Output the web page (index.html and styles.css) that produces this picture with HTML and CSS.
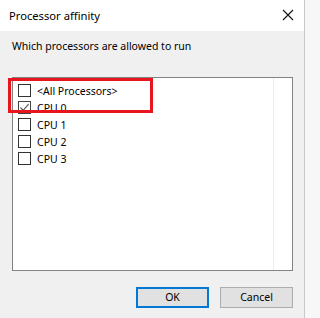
FILE: index.html
```html
<!DOCTYPE html>
<html>
<head>
<meta charset="utf-8">
<link rel="stylesheet" href="styles.css">
</head>
<body>
<div class="window">
  <div class="titlebar">
    <span class="title">Processor affinity</span>
    <svg class="close" width="12" height="12" viewBox="0 0 12 12"><path d="M1 1 L11 11 M11 1 L1 11" stroke="#111" stroke-width="1.1" fill="none"/></svg>
  </div>
  <div class="content">
    <div class="prompt">Which processors are allowed to run</div>
    <div class="listwrap">
      <div class="listbox">
        <div class="items">
          <div class="row"><span class="cb"></span><span>&lt;All Processors&gt;</span></div>
          <div class="row"><span class="cb checked"><svg width="11" height="11" viewBox="0 0 11 11"><path d="M1.5 5.5 L4.2 8.3 L9.6 2.2" stroke="#5a5a5a" stroke-width="1.2" fill="none"/></svg></span><span>CPU 0</span></div>
          <div class="row"><span class="cb"></span><span>CPU 1</span></div>
          <div class="row"><span class="cb"></span><span>CPU 2</span></div>
          <div class="row"><span class="cb"></span><span>CPU 3</span></div>
        </div>
      </div>
      <div class="highlight"></div>
    </div>
    <div class="buttons">
      <button class="btn default">OK</button>
      <button class="btn">Cancel</button>
    </div>
  </div>
</div>
</body>
</html>
```
FILE: styles.css
```css
html, body {
  margin: 0;
  padding: 0;
  background: #f7f7f7;
}
body {
  width: 310px;
  height: 318px;
  overflow: hidden;
  font-family: "Noto Sans", "Open Sans", sans-serif;
  font-size: 10.5px;
  color: #000;
}
.window {
  width: 304px;
  height: 318px;
  background: #f0f0f0;
  border-right: 1px solid #c9c9c9;
}
.titlebar {
  height: 31px;
  background: #fff;
  display: flex;
  align-items: center;
  justify-content: space-between;
  padding: 0 10px 0 9px;
}
.title {
  font-size: 11.2px;
  line-height: 16px;
}
.close {
  display: block;
  margin-top: -1px;
}
.content {
  padding: 0 11px 0 12px;
}
.prompt {
  margin-top: 7px;
  line-height: 16px;
}
.listwrap {
  position: relative;
  margin-top: 23px;
}
.listbox {
  height: 192px;
  border: 1px solid #828282;
  background: #fff;
}
.items {
  width: 261px;
  height: 192px;
  border-right: 1px solid #e3eefa;
  padding: 4px 0 0 5px;
  box-sizing: border-box;
}
.row {
  height: 17px;
  display: flex;
  align-items: center;
  gap: 6px;
  line-height: 16px;
}
.cb {
  width: 11px;
  height: 11px;
  border: 1px solid #333;
  background: #fff;
  display: flex;
  align-items: center;
  justify-content: center;
  margin-top: -1px;
}
.cb.checked {
  border-color: #444;
}
.cb svg {
  display: block;
}
.highlight {
  position: absolute;
  left: -4px;
  top: 1px;
  width: 139px;
  height: 29px;
  border: 3px solid #e8141e;
}
.buttons {
  display: flex;
  justify-content: flex-end;
  gap: 11px;
  margin-top: 16px;
}
.btn {
  width: 73px;
  height: 21px;
  background: #e1e1e1;
  border: 1px solid #adadad;
  font-family: "Noto Sans", "Open Sans", sans-serif;
  font-size: 10.5px;
  color: #000;
  padding: 0;
  line-height: 17px;
}
.btn.default {
  border: 2px solid #0078d7;
}
```
